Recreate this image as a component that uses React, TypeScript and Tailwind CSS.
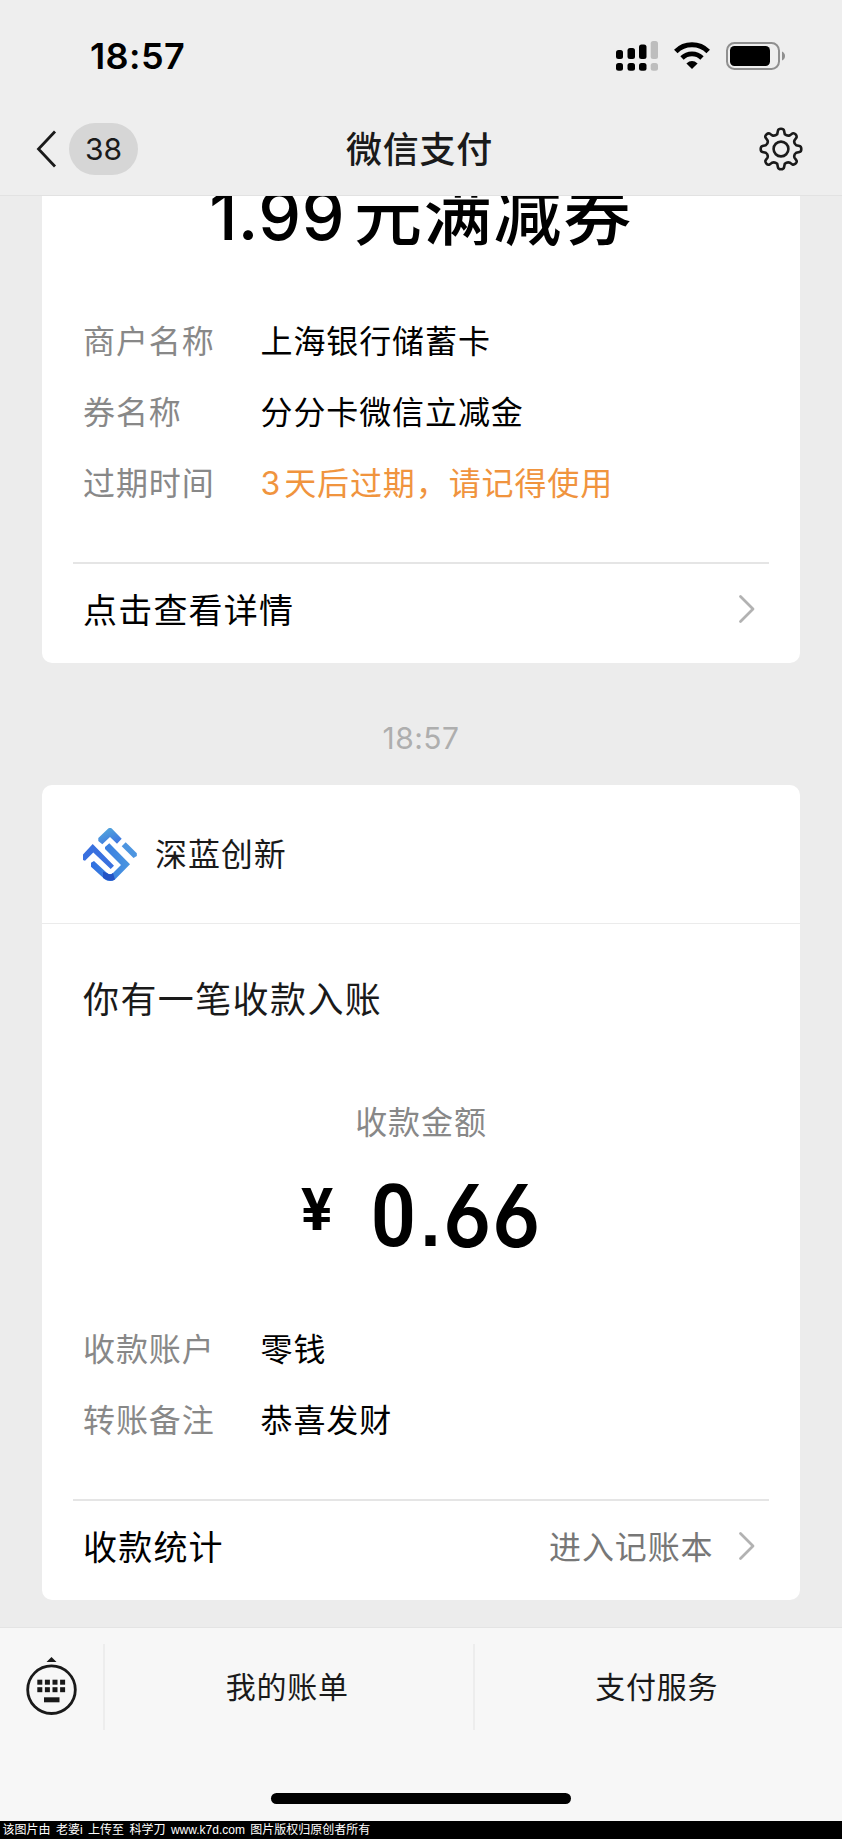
import type { ReactNode } from 'react';

const couponRows = [
  { label: '商户名称', value: '上海银行储蓄卡' },
  { label: '券名称', value: '分分卡微信立减金' },
  { label: '过期时间', value: '3天后过期，请记得使用', warn: true },
];

const paymentRows = [
  { label: '收款账户', value: '零钱' },
  { label: '转账备注', value: '恭喜发财' },
];

function SignalIcon() {
  return (
    <svg width="42" height="30" viewBox="0 0 42 30">
      <rect x="0" y="9" width="7" height="9" rx="2.5" />
      <rect x="11.5" y="7" width="7.5" height="11" rx="2.5" />
      <rect x="23" y="3.5" width="7.5" height="14.5" rx="2.5" />
      <rect x="34.7" y="0" width="7.3" height="18" rx="2.5" fill="#bdbdbd" />
      <rect x="0" y="22" width="7" height="7.7" rx="2.5" />
      <rect x="11.5" y="22" width="7.5" height="7.7" rx="2.5" />
      <rect x="23" y="22" width="7.5" height="7.7" rx="2.5" />
      <rect x="34.7" y="22" width="7.3" height="7.7" rx="2.5" fill="#bdbdbd" />
    </svg>
  );
}

function WifiIcon() {
  return (
    <svg width="36" height="28" viewBox="0 0 36 28">
      <path d="M1.8 9.5A23 23 0 0 1 34.2 9.5" fill="none" stroke="#000" strokeWidth="5" />
      <path d="M8 16A14.4 14.4 0 0 1 28 16" fill="none" stroke="#000" strokeWidth="4.8" />
      <path d="M18 27L12.4 21.4Q18 16.8 23.6 21.4Z" />
    </svg>
  );
}

function BatteryIcon() {
  return (
    <svg width="59" height="28" viewBox="0 0 59 28">
      <rect x="1" y="1" width="52" height="26" rx="7.5" fill="none" stroke="#8f8f8f" strokeWidth="2" />
      <rect x="4" y="4" width="40" height="20" rx="4.5" />
      <path d="M56 9.5Q59 11 59 14T56 18.5Z" fill="#8f8f8f" />
    </svg>
  );
}

function GearIcon() {
  return (
    <svg width="44" height="44" viewBox="-22 -22 44 44" fill="none" stroke="#1a1a1a" strokeWidth="2.6" strokeLinejoin="round">
      <circle r="7.4" />
      <path d="M-3 -18.5Q-2.6 -20.3 0 -20.3T3 -18.5L3.8 -14.8Q6.4 -12.6 9 -13.8L11.4 -15.5Q13.2 -16.2 14.6 -14.6T15.5 -11.4L13.4 -8.4Q12.6 -5.6 15.2 -3.8L18.5 -3Q20.3 -2.6 20.3 0T18.5 3L15.2 3.8Q12.6 5.6 13.4 8.4L15.5 11.4Q16.2 13.2 14.6 14.6T11.4 15.5L9 13.8Q6.4 12.6 3.8 14.8L3 18.5Q2.6 20.3 0 20.3T-3 18.5L-3.8 14.8Q-6.4 12.6 -9 13.8L-11.4 15.5Q-13.2 16.2 -14.6 14.6T-15.5 11.4L-13.4 8.4Q-12.6 5.6 -15.2 3.8L-18.5 3Q-20.3 2.6 -20.3 0T-18.5 -3L-15.2 -3.8Q-12.6 -5.6 -13.4 -8.4L-15.5 -11.4Q-16.2 -13.2 -14.6 -14.6T-11.4 -15.5L-9 -13.8Q-6.4 -12.6 -3.8 -14.8Z" />
    </svg>
  );
}

function Chevron() {
  return (
    <svg width="18" height="30" viewBox="0 0 18 30" className="mb-[4px] shrink-0">
      <path d="M2.5 2.500L15 15L2.5 27.500" fill="none" stroke="#b2b2b2" strokeWidth="2.8" strokeLinecap="round" strokeLinejoin="round" />
    </svg>
  );
}

function MerchantLogo() {
  return (
    <svg width="54" height="54" viewBox="0 0 54 54">
      <defs>
        <linearGradient id="bowl" x1="0" y1="0" x2="1" y2="0">
          <stop offset="0" stopColor="#2f6fe0" />
          <stop offset="1" stopColor="#4b97e0" />
        </linearGradient>
        <linearGradient id="roof" x1="0" y1="0" x2="0.6" y2="1">
          <stop offset="0" stopColor="#56aedb" />
          <stop offset="1" stopColor="#3f78e0" />
        </linearGradient>
      </defs>
      <path d="M15.300 10L25 0.700Q27 -1 29 0.700L38.700 10.700L34 15.800L27 9L19.300 16.300L15.300 13Z" fill="url(#roof)" />
      <path d="M0 26.500L9.700 16L31 37.700L27.700 41L10.300 24.500L2 32.700L0 32Z" fill="#3970df" />
      <path d="M22 19L26.300 15.300L47 36.300L32 51.500Q27 54.500 22 51.500L8 38.700V34.700L11 33L24 45Q27 47.500 30 45L38 37L22 21Z" fill="url(#bowl)" />
      <path d="M20 43.500L24 45Q27 47.500 30 45L32 51.500Q27 54.500 20 50Z" fill="#2353c5" />
      <path d="M38.700 18.300L42.700 14.300L53.800 25.300V28L50.500 30Z" fill="#4d95e0" />
    </svg>
  );
}

function KeyboardIcon() {
  const cols = [11, 18.6, 26.2, 33.8];
  return (
    <svg width="51" height="58" viewBox="0 0 51 58" fill="#1a1a1a">
      <path d="M25.500 0L30.500 5H20.500Z" />
      <circle cx="25.500" cy="32.700" r="23.800" fill="none" stroke="#1a1a1a" strokeWidth="2.800" />
      {cols.map((x) => (
        <g key={x}>
          <rect x={x + 0.3} y="22.700" width="5" height="5" />
          <rect x={x + 0.3} y="30.200" width="5" height="5" />
        </g>
      ))}
      <rect x="18" y="40.300" width="15.500" height="5" />
    </svg>
  );
}

function InfoRow({ label, value, warn }: { label: string; value: string; warn?: boolean }) {
  return (
    <div className="flex h-[71px] items-center text-[32px] tracking-[0.9px]">
      <span className="w-[177.5px] shrink-0 text-[#888888]">{label}</span>
      {warn ? (
        <span className="text-[#f0943e]">
          <span className="mr-[3px]">{value.slice(0, 1)}</span>
          {value.slice(1)}
        </span>
      ) : (
        <span className="text-black">{value}</span>
      )}
    </div>
  );
}

function CardFooter({ label, children }: { label: string; children?: ReactNode }) {
  return (
    <div className="mx-[31px] flex h-[101px] items-start border-t-2 border-[#e5e5e5] pl-[10px] pr-[13px]">
      <div className="flex h-[93px] flex-1 items-center">
        <span className="flex-1 text-[34px] tracking-[1.2px] text-black">{label}</span>
        {children}
        <Chevron />
      </div>
    </div>
  );
}

export default function App() {
  return (
    <div className="flex h-[1839px] w-[842px] flex-col overflow-hidden bg-[#ececec] font-[Inter,'Noto_Sans_CJK_SC',sans-serif] leading-none whitespace-nowrap">
      <header className="h-[196px] shrink-0 border-b border-[#e2e2e2] bg-[#eeeeee]">
        <div className="flex h-[112px] items-center pl-[90px] pr-[57px]">
          <span className="flex-1 text-[36px] font-semibold tracking-[0.4px] text-black">18:57</span>
          <div className="flex items-center">
            <SignalIcon />
            <span className="ml-[16px]"><WifiIcon /></span>
            <span className="ml-[16px]"><BatteryIcon /></span>
          </div>
        </div>
        <div className="flex h-[74px] items-center pl-[36px] pr-[39px]">
          <div className="flex flex-1 items-center gap-[12px]">
            <svg width="21" height="38" viewBox="0 0 21 38" fill="none" stroke="#1a1a1a" strokeWidth="2.8">
              <path d="M19 1.500L2.500 19L19 36.500" />
            </svg>
            <span className="flex h-[52px] w-[69px] items-center justify-center rounded-full bg-[#d6d6d6] text-[30px] text-[#1a1a1a]">38</span>
          </div>
          <h1 className="pt-[2px] text-[36px] font-medium tracking-[0.8px] text-[#1a1a1a]">微信支付</h1>
          <div className="flex flex-1 justify-end">
            <GearIcon />
          </div>
        </div>
      </header>

      <main className="h-[1431px] shrink-0 px-[42px]">
        <section className="flex h-[467px] flex-col overflow-hidden rounded-b-[10px] bg-white">
          <div className="-mt-[15px] flex h-[125px] items-start justify-center text-[68px] font-medium text-black">
            <span className="mr-[9px] tracking-[0.5px]">1.99</span>
            <span className="tracking-[1.700px]">元满减券</span>
          </div>
          <div className="h-[256px] pl-[41px]">
            {couponRows.map((row) => <InfoRow key={row.label} {...row} />)}
          </div>
          <CardFooter label="点击查看详情" />
        </section>

        <p className="flex h-[122px] items-center justify-center pt-[28px] text-[30px] tracking-[0.5px] text-[#aeaeae]">18:57</p>

        <section className="flex h-[815px] flex-col rounded-[10px] bg-white">
          <div className="flex h-[139px] items-center gap-[18px] border-b border-[#ebebeb] pl-[41px] pt-[2px] text-[32px] tracking-[0.9px] text-[#1a1a1a]">
            <MerchantLogo />
            深蓝创新
          </div>
          <h2 className="flex h-[150px] items-center pl-[41px] pt-[2px] text-[36px] tracking-[1.400px] text-[#1a1a1a]">你有一笔收款入账</h2>
          <p className="flex h-[98px] items-center justify-center text-[32px] tracking-[0.9px] text-[#888888]">收款金额</p>
          <div className="flex h-[142px] pl-[259px] font-[Roboto,sans-serif] text-[88px] font-semibold text-black">
            <span className="mt-[8px] w-[68px] text-[60px] font-bold">¥</span>
            <span className="flex w-[49px] origin-center scale-x-[0.9] justify-center">0</span>
            <span className="flex w-[25px] justify-center font-['Liberation_Sans',sans-serif] text-[72px] leading-[98px] font-bold">.</span>
            <span className="flex w-[49px] origin-center scale-x-[0.92] justify-center font-[Inter,sans-serif] text-[87px] [font-feature-settings:'cv03']">6</span>
            <span className="flex w-[49px] origin-center scale-x-[0.92] justify-center font-[Inter,sans-serif] text-[87px] [font-feature-settings:'cv03']">6</span>
          </div>
          <div className="h-[185px] pl-[41px]">
            {paymentRows.map((row) => <InfoRow key={row.label} {...row} />)}
          </div>
          <CardFooter label="收款统计">
            <span className="mr-[24.5px] text-[32px] tracking-[0.9px] text-[#777777]">进入记账本</span>
          </CardFooter>
        </section>
      </main>

      <footer className="flex h-[194px] shrink-0 flex-col items-center border-t border-[#e4e4e4] bg-[#f7f7f7]">
        <div className="flex h-[117px] w-full items-center text-[30px] tracking-[0.7px] text-[#1a1a1a]">
          <div className="flex w-[103px] justify-center pb-[2px]"><KeyboardIcon /></div>
          <div className="h-[86px] w-[2px] bg-[#ededed]" />
          <div className="flex flex-1 justify-center pr-[3px]">我的账单</div>
          <div className="h-[86px] w-[2px] bg-[#ededed]" />
          <div className="flex flex-1 justify-center pr-[3px]">支付服务</div>
        </div>
        <div className="mt-[48px] h-[11px] w-[300px] rounded-full bg-black" />
      </footer>

      <div className="flex h-[18px] shrink-0 items-center bg-black pl-[2.500px] font-['Liberation_Sans','Noto_Sans_CJK_SC',sans-serif] text-[12px] [word-spacing:2.100px] text-white">
        该图片由 老婆i 上传至 科学刀 www.k7d.com 图片版权归原创者所有
      </div>
    </div>
  );
}
